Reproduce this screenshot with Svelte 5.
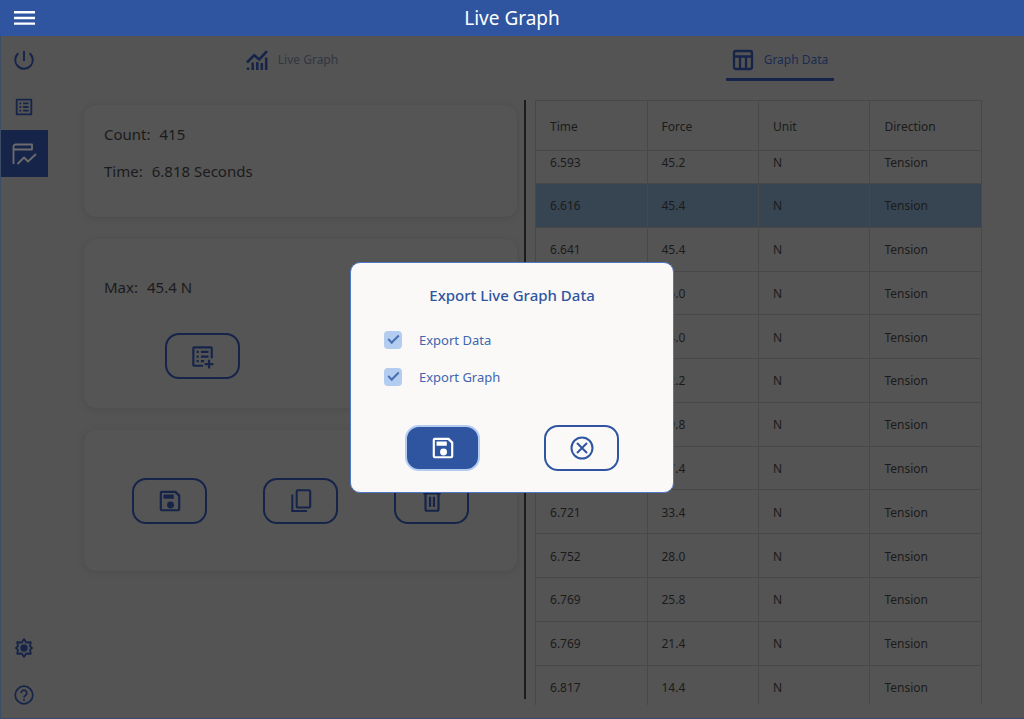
<script lang="ts">
	type Row = { time: string; force: string; selected?: boolean };

	let exportData = $state(true);
	let exportGraph = $state(true);
	let open = $state(true);

	const rows: Row[] = [
		{ time: '6.593', force: '45.2' },
		{ time: '6.616', force: '45.4', selected: true },
		{ time: '6.641', force: '45.4' },
		{ time: '6.641', force: '45.0' },
		{ time: '6.664', force: '44.0' },
		{ time: '6.664', force: '42.2' },
		{ time: '6.689', force: '39.8' },
		{ time: '6.705', force: '37.4' },
		{ time: '6.721', force: '33.4' },
		{ time: '6.752', force: '28.0' },
		{ time: '6.769', force: '25.8' },
		{ time: '6.769', force: '21.4' },
		{ time: '6.817', force: '14.4' }
	];

	function close() {
		open = false;
	}
</script>

{#snippet saveIcon()}
	<svg width="26" height="26" viewBox="0 0 24 24" fill="currentColor" aria-hidden="true">
		<path d="M17.500 2.500H4.500a2 2 0 0 0-2 2v15a2 2 0 0 0 2 2h15a2 2 0 0 0 2-2v-13l-4-4zm2 17h-15v-15h12l3 3v12zM12.500 12.500a3.200 3.200 0 1 0 0 6.400 3.200 3.200 0 0 0 0-6.400zM6 6h9.500v4H6z" />
	</svg>
{/snippet}

<div class="app">
	<header>
		<button class="menu" aria-label="Menu">
			<svg width="22" height="16" viewBox="0 0 22 16" fill="none" stroke="currentColor" stroke-width="2.4">
				<path d="M0 2.2h21M0 8h21M0 13.6h21" />
			</svg>
		</button>
		<h1>Live Graph</h1>
	</header>

	<div class="body">
		<nav>
			<button aria-label="Power">
				<svg width="24" height="24" viewBox="0 0 24 24" fill="none" stroke="currentColor" stroke-width="1.9">
					<path d="M12 3v10M17.6 5.2a8.8 8.8 0 1 1-11.2 0" />
				</svg>
			</button>
			<button aria-label="Results">
				<svg width="22" height="22" viewBox="0 0 24 24" fill="currentColor">
					<path d="M19 5v14H5V5h14m1.1-2H3.9c-.5 0-.9.4-.9.9v16.2c0 .4.4.9.9.9h16.2c.4 0 .9-.5.9-.9V3.9c0-.5-.5-.9-.9-.9zM11 7h6v2h-6V7zm0 4h6v2h-6v-2zm0 4h6v2h-6zM7 7h2v2H7zm0 4h2v2H7zm0 4h2v2H7z" />
				</svg>
			</button>
			<button class="active" aria-label="Live graph">
				<svg width="26" height="24" viewBox="0 0 26 24" fill="none" stroke="currentColor" stroke-width="1.8">
					<path d="M2.5 22V4.5a2 2 0 0 1 2-2H21v5H3M6.5 22l6.5-6.5 4 4L25 12" stroke-linejoin="round" />
				</svg>
			</button>
			<span class="spacer"></span>
			<button aria-label="Settings">
				<svg width="22" height="22" viewBox="0 0 24 24">
					<path fill="none" stroke="currentColor" stroke-width="2" stroke-linejoin="round" d="M12 2.300 14.400 6l5-.3-.9 4.200 2.200 2.100-2.200 2.100.9 4.200-5-.3L12 21.700 9.600 18l-5 .3.9-4.200L3.300 12l2.200-2.100-.9-4.200 5 .3z" />
					<circle cx="12" cy="12" r="4" fill="currentColor" />
				</svg>
			</button>
			<button aria-label="Help">
				<svg width="24" height="24" viewBox="0 0 24 24" fill="none" stroke="currentColor" stroke-width="1.7">
					<circle cx="12" cy="12" r="8.800" />
					<path d="M9.200 10a2.800 2.800 0 1 1 4.500 2.200c-1 .8-1.700 1.200-1.700 2.500M12 16v1.800" />
				</svg>
			</button>
		</nav>

		<main>
			<div class="tabs" role="tablist">
				<button role="tab" aria-selected="false">
					<svg width="22" height="22" viewBox="0 0 22 22" fill="none" stroke="currentColor">
						<path stroke-width="2.600" d="M1 13.500 8.200 6.200l5 4.200L21 2.200" />
						<path stroke-width="2.500" d="M2 21v-2.500M6.700 21v-7.500M11.300 21v-8M15.800 21v-7M20.200 21V8.500" />
					</svg>
					<span>Live Graph</span>
				</button>
				<button role="tab" aria-selected="true">
					<svg width="22" height="22" viewBox="0 0 22 22" fill="none" stroke="currentColor" stroke-width="2.300">
						<rect x="2" y="2" width="18" height="18" rx="2" />
						<path d="M2 7.500h18M8 7.500V20M14 7.500V20" />
					</svg>
					<span>Graph Data</span>
				</button>
			</div>

			<div class="content">
				<div class="cards">
					<section class="card summary">
						<p><span>Count:</span> <span>415</span></p>
						<p><span>Time:</span> <span>6.818 Seconds</span></p>
					</section>
					<section class="card max">
						<p><span>Max:</span> <span>45.4 N</span></p>
						<div class="actions two">
							<button class="btn" aria-label="Add to results">
								<svg width="26" height="26" viewBox="0 0 24 24" fill="none" stroke="currentColor" stroke-width="2">
									<path d="M13 21H4.800a.8.800 0 0 1-.8-.8V4.800A.8.800 0 0 1 4.800 4h15.400a.8.800 0 0 1 .8.800V14" />
									<path d="M7 8.200h2M11 8.200h7M7 12.500h2M11 12.500h7M7 16.800h2M11 16.800h3M18.500 15.500v8M14.500 19.500h8" />
								</svg>
							</button>
						</div>
					</section>
					<section class="card tools">
						<div class="actions three">
							<button class="btn" aria-label="Save">{@render saveIcon()}</button>
							<button class="btn" aria-label="Copy">
								<svg width="26" height="26" viewBox="0 0 24 24" fill="none" stroke="currentColor" stroke-width="1.900">
									<rect x="8" y="2" width="12.500" height="16" rx="1" />
									<path d="M4 6v15.200h13.500" />
								</svg>
							</button>
							<button class="btn" aria-label="Delete">
								<svg width="26" height="26" viewBox="0 0 24 24" fill="none" stroke="currentColor" stroke-width="2">
									<path d="M4 5h16M9 4h6M6 5v14.500c0 .8.500 1.500 1.500 1.500h9c1 0 1.500-.7 1.500-1.500V5M10.200 8v9.500M13.800 8v9.500" />
								</svg>
							</button>
						</div>
					</section>
				</div>

				<div class="divider"></div>

				<div class="readings">
					<table>
						<thead>
							<tr>
								<th>Time</th>
								<th>Force</th>
								<th>Unit</th>
								<th>Direction</th>
							</tr>
						</thead>
						<tbody>
							{#each rows as row}
								<tr class:selected={row.selected}>
									<td>{row.time}</td>
									<td>{row.force}</td>
									<td>N</td>
									<td>Tension</td>
								</tr>
							{/each}
						</tbody>
					</table>
				</div>
			</div>
		</main>

		{#if open}
			<div class="overlay">
				<div class="dialog" role="dialog" aria-modal="true" aria-labelledby="dialog-title">
					<h2 id="dialog-title">Export Live Graph Data</h2>
					<label><input type="checkbox" bind:checked={exportData} />Export Data</label>
					<label><input type="checkbox" bind:checked={exportGraph} />Export Graph</label>
					<div class="actions two">
						<button class="btn primary" aria-label="Save" onclick={close}>{@render saveIcon()}</button>
						<button class="btn" aria-label="Cancel" onclick={close}>
							<svg width="26" height="26" viewBox="0 0 26 26" fill="none" stroke="currentColor" stroke-width="2">
								<circle cx="13" cy="13" r="10.500" />
								<path d="m8 8 10 10M18 8 8 18" />
							</svg>
						</button>
					</div>
				</div>
			</div>
		{/if}
	</div>
</div>

<style>
	:global(body) { margin: 0; background: #545454; }
	.app {
		--blue: #2f55a0;
		--navy: #16244a;
		--line: #484848;
		display: flex;
		flex-direction: column;
		height: 100vh;
		font-family: 'Noto Sans', 'Open Sans', sans-serif;
		font-size: 15px;
		line-height: 20px;
		color: #1b1b1b;
	}
	.app *, .app *::after { box-sizing: border-box; }
	button {
		padding: 0;
		border: 0;
		background: none;
		color: inherit;
		font: inherit;
		cursor: pointer;
	}
	svg { display: block; }

	header {
		display: grid;
		grid-template-columns: 48px 1fr 48px;
		align-items: center;
		flex: none;
		height: 36px;
		background: var(--blue);
		box-shadow: 0 1px 0 var(--blue);
		color: #fff;
	}
	h1 {
		margin: 0;
		font-size: 19px;
		font-weight: 400;
		line-height: 24px;
		text-align: center;
	}
	.menu {
		display: grid;
		place-items: center;
		height: 36px;
		padding-left: 2px;
	}

	.body {
		position: relative;
		display: flex;
		flex: 1;
		min-height: 0;
		border-left: 1px solid #3b4c66;
		border-bottom: 1px solid #3b4c66;
		background: #545454;
		background-clip: padding-box;
	}
	nav {
		display: flex;
		flex-direction: column;
		width: 47px;
		color: var(--navy);
	}
	nav button {
		display: grid;
		place-items: center;
		height: 47px;
		padding-right: 1px;
	}
	nav .active { background: var(--navy); color: #6c6c6c; }
	.spacer { flex: 1; }

	main {
		display: flex;
		flex: 1;
		flex-direction: column;
		min-width: 0;
		box-shadow: 0 1px 0 var(--blue);
		clip-path: inset(0);
	}
	.tabs {
		display: grid;
		grid-template-columns: 1fr 1fr;
		justify-items: center;
		color: var(--navy);
	}
	.tabs button {
		display: flex;
		align-items: center;
		gap: 10px;
		height: 45px;
		padding: 5px 6px 0;
		border-bottom: 3px solid transparent;
		border-radius: 1px;
		font-size: 12px;
	}
	.tabs button span { color: #32363f; }
	.tabs [aria-selected='true'] { border-color: var(--navy); }
	.tabs [aria-selected='true'] span { color: #1c2b52; }

	.content {
		display: grid;
		grid-template-columns: 31fr auto 32fr;
		flex: 1;
		min-height: 0;
		padding: 19px 42px 13px 36px;
	}
	.cards {
		display: flex;
		flex-direction: column;
		gap: 22px;
		padding-top: 5px;
	}
	.card {
		padding: 19px 20px 20px;
		border-radius: 12px;
		background: #555;
		box-shadow: 0 1px 5px 1px #4e4e4e;
	}
	.card p { display: flex; gap: 9px; margin: 0; }
	.summary { display: grid; align-content: start; gap: 17px; height: 112px; }
	.max { height: 169px; padding-top: 38px; }
	.max .actions { margin-top: 36px; }
	.tools { display: grid; align-items: center; height: 141px; padding-top: 20px; }

	.actions { display: grid; justify-items: center; }
	.two { grid-template-columns: 1fr 1fr; }
	.three { grid-template-columns: 1fr 1fr 1fr; }
	.btn {
		display: grid;
		place-items: center;
		width: 75px;
		height: 46px;
		border: 2px solid currentColor;
		border-radius: 14px;
		color: var(--navy);
	}

	.divider { width: 2px; margin: 0 9px 6px 7px; background: #1c1c1c; }

	.readings { min-height: 0; }
	table {
		width: 100%;
		height: 100%;
		table-layout: fixed;
		border-collapse: collapse;
		font-size: 12px;
	}
	th, td {
		padding: 2px 14px 0;
		border: 1px solid var(--line);
		font-weight: 400;
		text-align: left;
	}
	thead tr { height: 50px; }
	/* the list is scrolled part way through its first and last row */
	tbody tr:first-child { height: 33px; }
	tbody tr:first-child td { padding: 0 14px 9px; }
	tbody tr:last-child { height: 40px; }
	tbody tr:last-child td { padding-top: 5px; border-bottom: 0; }
	.selected { background: #374552; }

	.overlay {
		position: absolute;
		inset: 0 0 0 -1px;
		display: grid;
		place-items: center;
	}
	.dialog {
		display: flex;
		flex-direction: column;
		width: 324px;
		padding: 21px 22px;
		border: 1px solid #4f78c4;
		border-radius: 10px;
		background: #faf9f8;
		color: var(--blue);
	}
	h2 {
		margin: 0 0 24px;
		font-size: 15px;
		font-weight: 500;
		line-height: 22px;
		text-align: center;
	}
	label {
		display: flex;
		align-items: center;
		gap: 17px;
		margin: 0 11px 17px;
		color: #4165ae;
		font-size: 13px;
	}
	input {
		appearance: none;
		display: grid;
		place-items: center;
		width: 18px;
		height: 18px;
		margin: 0;
		border-radius: 4px;
		background: #b3cdf0;
	}
	input:checked::after {
		content: '';
		width: 11px;
		height: 6px;
		margin-bottom: 4px;
		border: solid #4a6fb5;
		border-width: 0 0 2px 2px;
		transform: rotate(-45deg);
	}
	.dialog .actions { margin-top: 21px; }
	.dialog .btn { color: var(--blue); }
	.dialog .primary {
		border-color: #b3cdf0;
		background: var(--blue);
		color: #fff;
	}
</style>
